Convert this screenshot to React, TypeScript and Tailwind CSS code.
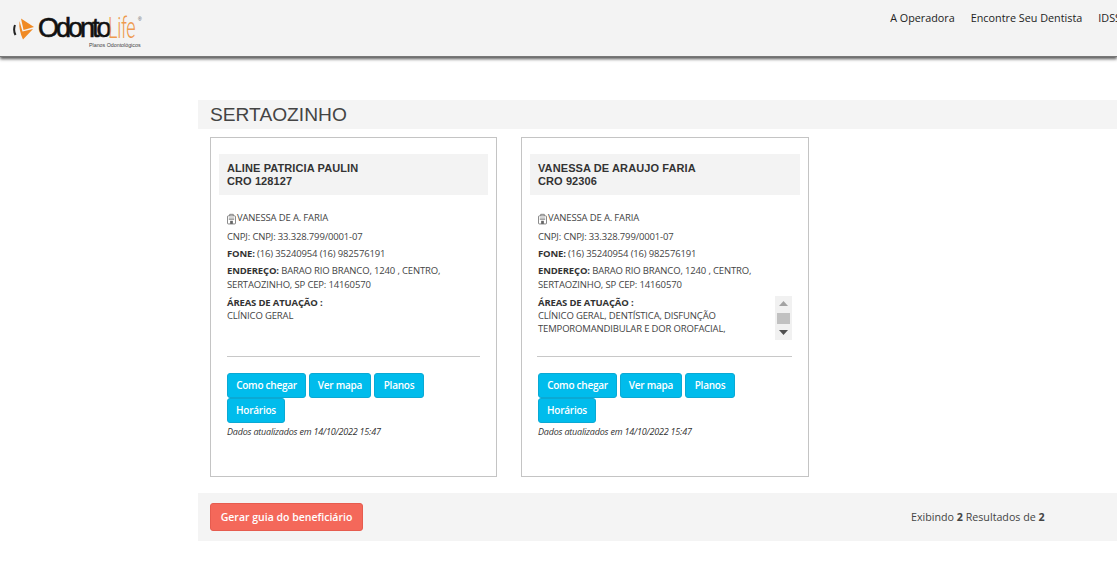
import React from 'react';

const dentists = [
  {
    name: 'ALINE PATRICIA PAULIN',
    cro: 'CRO 128127',
    areas: ['CLÍNICO GERAL'],
    scroll: false,
    width: 'w-[287px]',
    rule: 'w-[253px]',
  },
  {
    name: 'VANESSA DE ARAUJO FARIA',
    cro: 'CRO 92306',
    areas: ['CLÍNICO GERAL, DENTÍSTICA, DISFUNÇÃO', 'TEMPOROMANDIBULAR E DOR OROFACIAL,'],
    scroll: true,
    width: 'w-[288px]',
    rule: '-ml-[1px] w-[255px]',
  },
];

const ClinicIcon = () => (
  <svg width="9" height="12" viewBox="0 0 10 12" className="shrink-0" fill="none" stroke="#777" strokeWidth="1">
    <rect x="0.5" y="2.5" width="9" height="9" rx="1" />
    <path d="M3 2.5V0.8h4v1.7" />
    <path d="M2 5h6M2 6.5h6" strokeWidth="0.8" />
    <rect x="3.5" y="8" width="3" height="3.5" fill="#666" stroke="none" />
  </svg>
);

const Logo = () => (
  <div className="flex flex-col ml-[13px] mt-[15px]">
    <div className="flex items-center h-[27px] w-[127px]">
      <svg width="22" height="22" viewBox="0 0 22 22" className="shrink-0">
        <path d="M2 7 Q0 12 2.5 17" fill="none" stroke="#222" strokeWidth="2" />
        <path d="M8 0.5 L21 9 L10.5 12 Z" fill="#f08a24" />
        <path d="M6.5 3 L9.5 13.5 L20 11 L10 21.5 Q5.5 12 6.5 3 Z" fill="#f08a24" />
      </svg>
      <span className="w-[70px] ml-[3px] shrink-0 font-['Liberation_Sans',sans-serif] text-[27px] leading-none tracking-[-3px] text-[#111] [-webkit-text-stroke:0.6px_#111]">
        Odonto
      </span>
      <span className="w-[29px] shrink-0 origin-left scale-x-[0.62] font-['Roboto',sans-serif] text-[29px] leading-none text-[#ee9a4e] font-light tracking-[-0.5px]">
        Life
      </span>
      <span className="self-start ml-[1px] mt-[2px] text-[5px] leading-none text-[#555] font-['Liberation_Sans',sans-serif]">®</span>
    </div>
    <span className="text-[5.3px] leading-[6px] text-[#444] ml-[76px] font-['Liberation_Sans',sans-serif]">
      Planos Odontológicos
    </span>
  </div>
);

const Button = ({ label, className }: { label: string; className: string }) => (
  <button className={`h-[25px] bg-[#00bcec] border border-[#0aa9d4] rounded-[3px] text-white text-[10px] font-semibold tracking-[-0.25px] ${className}`}>
    {label}
  </button>
);

const Card = ({ d }: { d: (typeof dentists)[number] }) => (
  <div className={`${d.width} h-[340px] border border-[#c4c4c4] pt-[16px] px-[8px]`}>
    <div className="h-[41px] bg-[#f3f3f3] pl-[8px] pt-[8px] font-['Liberation_Sans',sans-serif] font-bold text-[11px] leading-[13px] tracking-[0.1px] text-[#333]">
      <div>{d.name}</div>
      <div>{d.cro}</div>
    </div>
    <div className="pl-[8px] pr-[8px] mt-[16px] text-[9.5px] text-[#444] tracking-[-0.16px]">
      <div className="flex items-center gap-[1px] h-[15px]">
        <ClinicIcon />
        <span>VANESSA DE A. FARIA</span>
      </div>
      <div className="h-[15px] mt-[3px] leading-[15px]">CNPJ: CNPJ: 33.328.799/0001-07</div>
      <div className="h-[15px] mt-[2px] leading-[15px]">
        <b className="font-bold text-[#333]">FONE:</b> (16) 35240954 (16) 982576191
      </div>
      <div className="mt-[3px] leading-[14px]">
        <b className="font-bold text-[#333]">ENDEREÇO:</b> BARAO RIO BRANCO, 1240 , CENTRO,
        <br />
        SERTAOZINHO, SP CEP: 14160570
      </div>
      <div className="relative mt-[4px] h-[60px] leading-[13px]">
        <div className="font-bold text-[#333]">ÁREAS DE ATUAÇÃO :</div>
        {d.areas.map(a => (
          <div key={a}>{a}</div>
        ))}
        {d.scroll && (
          <div className="absolute right-0 top-0 w-[17px] h-[44px] bg-[#f1f1f1] flex flex-col items-center justify-between py-[5px]">
            <svg width="9" height="5" viewBox="0 0 9 5">
              <path d="M4.5 0 L9 5 H0 Z" fill="#a3a3a3" />
            </svg>
            <div className="w-[13px] h-[11px] bg-[#c1c1c1]" />
            <svg width="9" height="5" viewBox="0 0 9 5">
              <path d="M0 0 H9 L4.5 5 Z" fill="#505050" />
            </svg>
          </div>
        )}
      </div>
      <div className={`h-px bg-[#c8c8c8] ${d.rule}`} />
      <div className="flex flex-wrap w-[253px] gap-x-[3px] mt-[16px]">
        <Button label="Como chegar" className="w-[79px]" />
        <Button label="Ver mapa" className="w-[62px]" />
        <Button label="Planos" className="w-[50px]" />
        <Button label="Horários" className="w-[58px]" />
      </div>
      <div className="mt-[2px] text-[9px] italic leading-[14px] text-[#333] tracking-[-0.2px]">Dados atualizados em 14/10/2022 15:47</div>
    </div>
  </div>
);

export default function App() {
  return (
    <div className="min-h-[563px] bg-white font-['Open_Sans',sans-serif] overflow-hidden">
      <header className="h-[57px] bg-[#f3f3f3] flex justify-between items-start shadow-[0_2px_3px_#555] border-b border-[#777]">
        <Logo />
        <nav className="flex gap-[16px] pt-[10px] mr-[-4px] text-[10.8px] leading-[16px] text-[#222]">
          <span>A Operadora</span>
          <span>Encontre Seu Dentista</span>
          <span>IDSS</span>
        </nav>
      </header>

      <main className="ml-[198px] mt-[43px]">
        <div className="h-[29px] bg-[#f4f4f4] pl-[12px] font-['Liberation_Sans',sans-serif] text-[19.2px] leading-[29px] text-[#444]">
          SERTAOZINHO
        </div>
        <div className="flex gap-[24px] pl-[12px] mt-[8px]">
          {dentists.map(d => (
            <Card key={d.name} d={d} />
          ))}
        </div>
        <div className="h-[48px] mt-[16px] bg-[#f4f4f4] pl-[12px] flex items-center">
          <button className="w-[153px] h-[28px] bg-[#f4685a] border border-[#e65c4f] rounded-[3px] text-white text-[10.5px] font-semibold pt-[1px]">
            Gerar guia do beneficiário
          </button>
          <div className="ml-[548px] text-[10.7px] text-[#444]">
            Exibindo <b className="font-bold">2</b> Resultados de <b className="font-bold">2</b>
          </div>
        </div>
      </main>
    </div>
  );
}
